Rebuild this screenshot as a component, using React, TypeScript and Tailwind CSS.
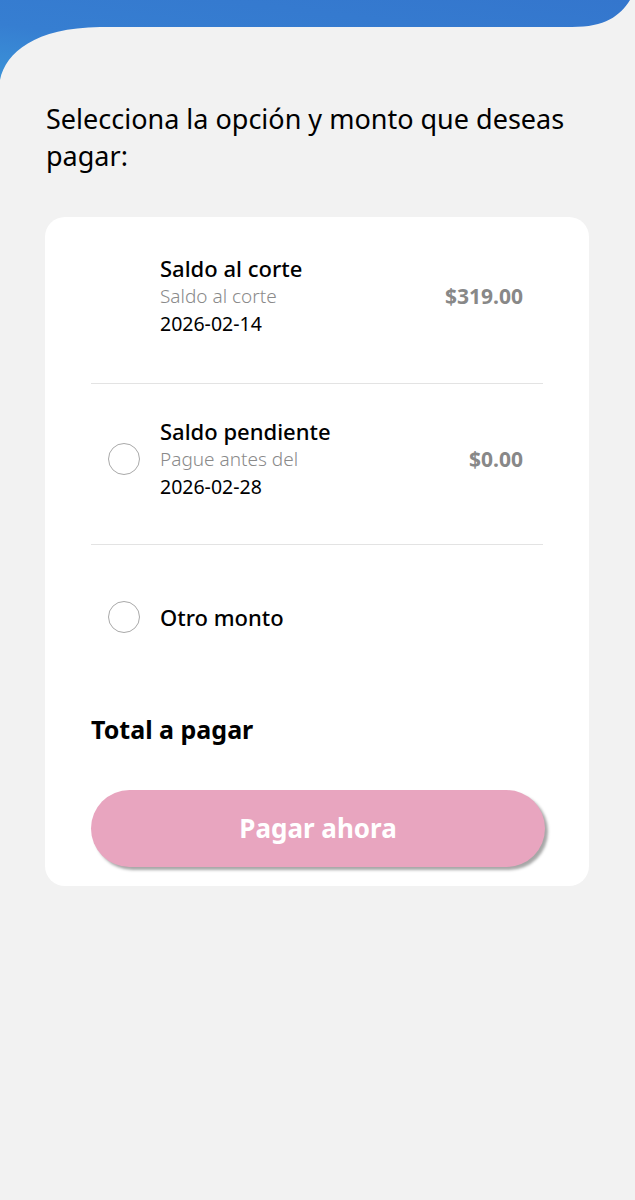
import React from "react";

function Radio() {
  return <div className="w-8 h-8 rounded-full border-[1.5px] border-[#a9a9a9] bg-white shrink-0" />;
}

export default function App() {
  return (
    <div
      className="min-h-[1200px] w-[635px] bg-[#f2f2f2] flex flex-col"
      style={{ fontFamily: '"Noto Sans", "Open Sans", sans-serif' }}
    >
      <svg width="635" height="80" viewBox="0 0 635 80" className="block shrink-0">
        <defs>
          <linearGradient id="hg" x1="0" y1="1" x2="1" y2="0">
            <stop offset="0" stopColor="#3b93d8" />
            <stop offset="0.35" stopColor="#367ed1" />
            <stop offset="1" stopColor="#3476cd" />
          </linearGradient>
        </defs>
        <path
          d="M0 0 H630 C 620 16, 605 27, 572 27 H100 C 35 28, 6 52, 0 80 Z"
          fill="url(#hg)"
        />
      </svg>

      <h1 className="ml-[46px] mt-[20px] pr-[30px] text-[27px] leading-[37px] text-black font-normal">
        Selecciona la opción y monto que deseas pagar:
      </h1>

      <div className="ml-[45px] mt-[43px] w-[544px] bg-white rounded-[20px] px-[46px] pb-[19px]">
        {/* Row 1 */}
        <div className="flex items-center pt-[37px] pb-[46px] border-b border-[#e3e3e3]">
          <div className="w-8 ml-[17px] shrink-0" />
          <div className="ml-[20px] flex-1 flex flex-col">
            <span className="text-[22px] leading-[29px] font-medium text-black">Saldo al corte</span>
            <span className="text-[19px] leading-[27px] font-light text-[#8a8a8a]">Saldo al corte</span>
            <span className="text-[19.5px] leading-[27px] text-black">2026-02-14</span>
          </div>
          <span className="mr-[20px] mt-[3px] text-[21px] font-bold text-[#888888]">$319.00</span>
        </div>

        {/* Row 2 */}
        <div className="flex items-center pt-[33px] pb-[44px] border-b border-[#e3e3e3]">
          <div className="ml-[17px]">
            <Radio />
          </div>
          <div className="ml-[20px] flex-1 flex flex-col">
            <span className="text-[22px] leading-[29px] font-medium text-black">Saldo pendiente</span>
            <span className="text-[19px] leading-[27px] font-light text-[#8a8a8a]">Pague antes del</span>
            <span className="text-[19.5px] leading-[27px] text-black">2026-02-28</span>
          </div>
          <span className="mr-[20px] mt-[2px] text-[21px] font-bold text-[#888888]">$0.00</span>
        </div>

        {/* Row 3 */}
        <div className="flex items-center pt-[56px]">
          <div className="ml-[17px]">
            <Radio />
          </div>
          <span className="ml-[20px] text-[22px] leading-[29px] font-medium text-black">Otro monto</span>
        </div>

        <div className="mt-[80px] text-[25px] leading-[32px] font-bold text-black">Total a pagar</div>

        <button className="mt-[45px] w-[454px] h-[77px] rounded-full bg-[#e8a5bf] text-white text-[26px] font-bold shadow-[3px_3px_3px_rgba(0,0,0,0.35)]">
          Pagar ahora
        </button>
      </div>
    </div>
  );
}
